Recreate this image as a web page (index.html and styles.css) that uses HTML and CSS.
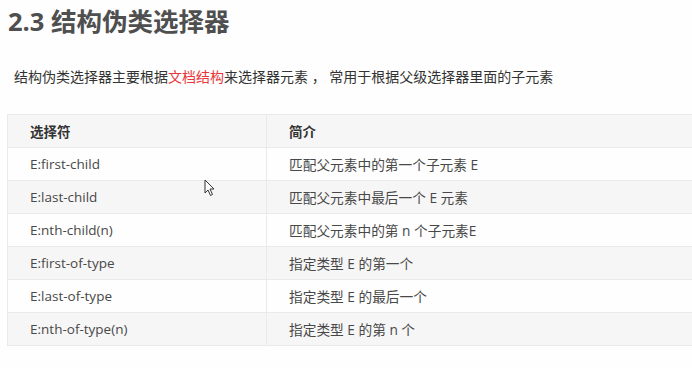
FILE: index.html
```html
<!DOCTYPE html>
<html lang="zh">
<head>
<meta charset="utf-8">
<link rel="stylesheet" href="styles.css">
</head>
<body>
<main class="page">
  <h2 class="title">2.3 结构伪类选择器</h2>
  <p class="intro">结构伪类选择器主要根据<span class="hl">文档结构</span>来选择器元素 ， 常用于根据父级选择器里面的子元素</p>
  <div class="table-wrap">
    <table class="sel-table">
      <thead>
        <tr><th class="c1">选择符</th><th>简介</th></tr>
      </thead>
      <tbody>
        <tr><td class="c1">E:first-child</td><td>匹配父元素中的第一个子元素 E</td></tr>
        <tr><td class="c1">E:last-child</td><td>匹配父元素中最后一个 E 元素</td></tr>
        <tr><td class="c1">E:nth-child(n)</td><td>匹配父元素中的第 n 个子元素E</td></tr>
        <tr><td class="c1">E:first-of-type</td><td>指定类型 E 的第一个</td></tr>
        <tr><td class="c1">E:last-of-type</td><td>指定类型 E 的最后一个</td></tr>
        <tr><td class="c1">E:nth-of-type(n)</td><td>指定类型 E 的第 n 个</td></tr>
      </tbody>
    </table>
    <svg class="cursor" width="12" height="18" viewBox="0 0 12 18" aria-hidden="true">
      <path d="M1 1 L1 14 L4 11 L6.5 16.5 L8.5 15.5 L6 10 L10 10 Z" fill="#fff" stroke="#333" stroke-width="1" stroke-linejoin="round"/>
    </svg>
  </div>
</main>
</body>
</html>
```

FILE: styles.css
```css
html, body {
  margin: 0;
  padding: 0;
  background: #fdfefd;
  overflow: hidden;
}
.page {
  width: 692px;
  height: 368px;
  overflow: hidden;
  font-family: "Open Sans", "Noto Sans CJK SC", sans-serif;
  color: #333;
}
.title {
  margin: 0;
  padding: 4px 0 0 8px;
  font-size: 25.5px;
  line-height: 34px;
  font-weight: 700;
  color: #4f4f4f;
}
.intro {
  margin: 0;
  padding: 29px 0 0 14px;
  font-size: 14px;
  line-height: 20px;
  color: #333;
}
.hl {
  color: #e8373c;
}
.table-wrap {
  position: relative;
  margin: 27px 0 0 7px;
}
.sel-table {
  width: 740px;
  border-collapse: collapse;
  font-size: 13.7px;
  color: #484848;
}
.sel-table th,
.sel-table td {
  height: 32px;
  padding: 0 0 0 22px;
  text-align: left;
  border: 1px solid #e9eaec;
  vertical-align: middle;
}
.sel-table th {
  font-weight: 700;
  color: #333;
  font-size: 13.5px;
}
.sel-table .c1 {
  width: 236px;
}
.sel-table td.c1 {
  font-size: 13.5px;
}
.sel-table thead tr,
.sel-table tbody tr:nth-child(even) {
  background: #f6f6f6;
}
.sel-table tbody tr:nth-child(odd) {
  background: #fdfefd;
}
.cursor {
  position: absolute;
  left: 197px;
  top: 65px;
}
```
